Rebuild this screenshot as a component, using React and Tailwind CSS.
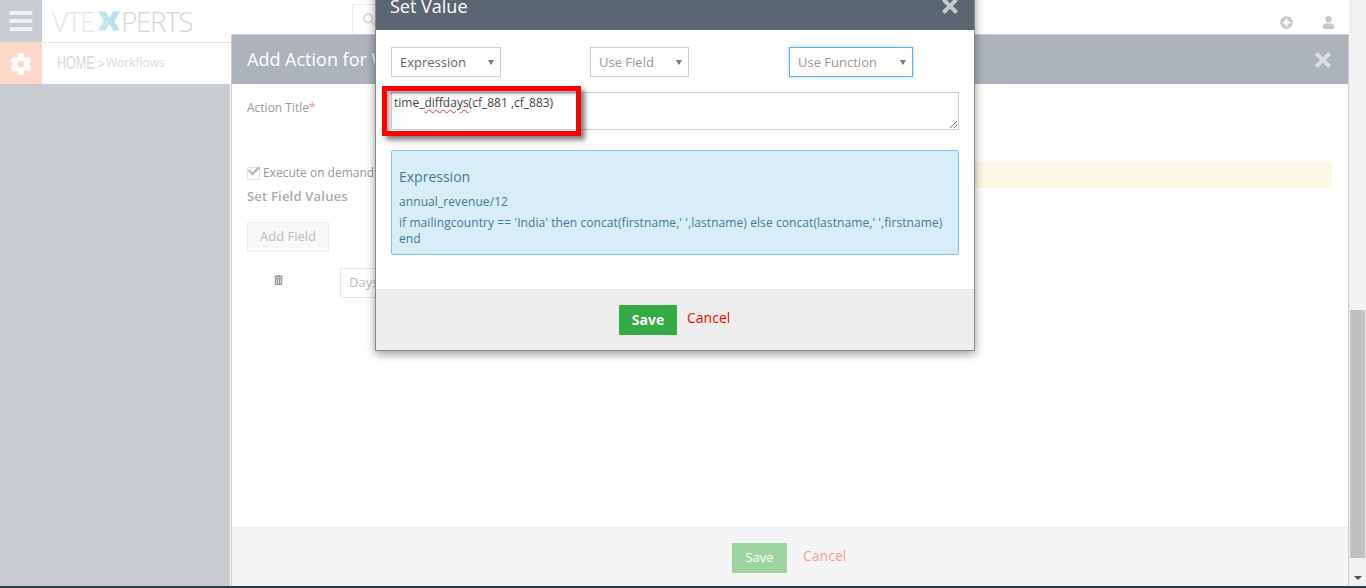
import React from "react";
import { FaBars, FaCog, FaPlusCircle, FaUser, FaTimes, FaSearch, FaTrashAlt, FaCheck } from "react-icons/fa";

function Sel({ label, w, dark, focus }) {
  return (
    <div className={`flex h-[30px] items-center justify-between bg-white pl-2 pr-[6px] text-[13px] ${w} ${dark ? "text-[#666]" : "text-[#999]"} border ${focus ? "border-[#66afe9] shadow-[0_0_3px_rgba(102,175,233,0.7)]" : "border-[#ccc]"}`}>
      <span className="pt-[1px]">{label}</span>
      <span className="h-0 w-0 border-x-[3px] border-t-[5px] border-x-transparent border-t-[#777]" />
    </div>
  );
}

export default function App() {
  return (
    <div className="relative h-[588px] w-[1366px] overflow-hidden bg-[#c8ccd0] font-['Open_Sans','Liberation_Sans',sans-serif]">
      <div className="flex h-[586px] flex-col">
        {/* header */}
        <div className="flex h-[42px] w-[1349px] items-center bg-white">
          <div className="flex h-[42px] w-[42px] items-center justify-center bg-[#c8ccd0] text-[#f2f3f4]">
            <FaBars className="h-[26px] w-[24px]" />
          </div>
          <div className="ml-[10px] flex w-[140px] items-center text-[28px] font-light leading-none tracking-[-1.5px] text-[#d6d6d6]">
            <span className="w-[48px] text-[#e6e6e6]">VTE</span>
            <svg width="23" height="20" viewBox="0 0 23 20" className="mr-[1px]">
              <path d="M0 0h8l6 10-6 10H0l6-10z" fill="#bfe8ea" />
              <path d="M23 0h-7l-5 8 1.5 2L11 12l5 8h7l-6-10z" fill="#bbdfec" />
            </svg>
            <span>PERTS</span>
          </div>
          <div className="mb-[8px] ml-[160px] flex h-[30px] w-[24px] items-center self-end overflow-hidden border border-b-0 border-[#eee] pl-[10px] text-[#ddd]">
            <FaSearch className="h-[13px] w-[13px] shrink-0" />
          </div>
          <div className="ml-auto flex items-center gap-[29px] pr-[14px] pt-[3px] text-[#c8c8c8]">
            <FaPlusCircle className="h-[13px] w-[13px]" />
            <FaUser className="h-[13px] w-[13px]" />
          </div>
        </div>
        {/* breadcrumb */}
        <div className="flex h-[42px] w-[1349px] border-t border-[#fbd9cd] bg-white">
          <div className="flex h-[41px] w-[42px] items-center justify-center bg-[#fdd8ca] text-white">
            <FaCog className="h-[22px] w-[22px]" />
          </div>
          <div className="ml-[15px] flex items-center text-[12px] text-[#d8d8dc]">
            <span className="w-[40px] origin-left scale-x-[0.66] font-['Liberation_Sans',sans-serif] text-[19px]">HOME</span>
            <span className="w-[9px] text-[15px] leading-none">&gt;</span>
            <span className="pb-[2px]">Workflows</span>
          </div>
        </div>
        {/* body */}
        <div className="flex flex-1">
          <div className="w-[230px]" />
          <div className="w-[1119px] bg-white" />
          <div className="w-[17px] bg-[#f1f1f1]" />
        </div>
      </div>
      <div className="h-[2px] bg-[#2f3a40]" />

      {/* scrollbar */}
      <div className="absolute left-[1349px] top-0 h-[586px] w-[17px] bg-[#f1f1f1]">
        <div className="absolute left-[1px] top-[310px] h-[248px] w-[15px] bg-[#c1c1c1]" />
        <div className="absolute left-[5px] top-[576px] h-0 w-0 border-x-[4px] border-t-[4px] border-x-transparent border-t-[#505050]" />
      </div>

      {/* back panel */}
      <div className="absolute left-[231px] top-[34px] flex h-[552px] w-[1118px] flex-col border-x border-t border-[#ccc] bg-white">
        <div className="flex h-[49px] shrink-0 items-center justify-between bg-[#adb3ba] pl-[15px] pr-[14px] text-white">
          <span className="text-[18px]">Add Action for Workflow</span>
          <FaTimes className="h-[22px] w-[22px] text-[#dcdfe2]" />
        </div>
        <div className="flex-1 px-[15px] text-[12px] text-[#999]">
          <div className="mt-[15px]">Action Title<span className="text-[#f09090]">*</span></div>
          <div className="mt-[47px] flex items-center">
            <span className="relative h-[13px] w-[13px] border border-[#e4e4e4]">
              <FaCheck className="absolute -top-[3px] left-0 h-[12px] w-[12px] text-[#bbb]" />
            </span>
            <span className="ml-[3px]">Execute on demand</span>
          </div>
          <div className="mt-[5px] text-[13px] font-semibold tracking-[0.2px] text-[#aaa]">Set Field Values</div>
          <div className="mt-[15px] flex h-[30px] w-[82px] items-center justify-center border border-[#eee] bg-[#f8f8f8] text-[13px] text-[#bbb]">Add Field</div>
          <div className="mt-[16px] flex items-start">
            <FaTrashAlt className="ml-[27px] mt-[7px] h-[10px] w-[9px] text-[#999]" />
            <div className="ml-[57px] flex h-[30px] w-[120px] items-center border border-[#e8e8e8] pl-2 text-[13px] text-[#bbb]">Days</div>
          </div>
          <div className="absolute left-[360px] right-[16px] top-[127px] h-[26px] bg-[#fcf8e8]" />
        </div>
        <div className="flex h-[59px] shrink-0 items-start border-t border-[#eee] bg-[#f5f5f5] pl-[500px] pt-[15px]">
          <div className="flex h-[30px] w-[55px] items-center justify-center bg-[#9dd4a1] text-[13px] text-white">Save</div>
          <span className="ml-[16px] text-[14px] leading-[26px] text-[#f99]">Cancel</span>
        </div>
      </div>

      {/* front modal */}
      <div className="absolute left-[375px] top-[-20px] flex h-[371px] w-[600px] flex-col border border-[#888] bg-white shadow-[0_3px_9px_rgba(0,0,0,0.4)]">
        <div className="flex h-[49px] shrink-0 justify-between bg-[#5a6773] pl-[14px] pr-[13px] text-white">
          <span className="pt-[12px] text-[18px]">Set Value</span>
          <FaTimes className="mt-[14px] h-[22px] w-[22px] text-[#c4c9ce]" />
        </div>
        <div className="flex-1 px-[15px] pt-[17px]">
          <div className="flex items-center">
            <Sel label="Expression" w="w-[110px]" dark />
            <div className="ml-[89px]"><Sel label="Use Field" w="w-[99px]" /></div>
            <div className="ml-[100px]"><Sel label="Use Function" w="w-[124px]" focus /></div>
          </div>
          <div className="relative mt-[15px] h-[38px] w-[568px] border border-[#ccc] pl-[2px] pt-[1px] text-[12px] text-[#444]">
            <span>time_</span><span className="underline decoration-wavy decoration-[#e33] decoration-[1px] underline-offset-2">diffdays</span><span>(cf_881 ,cf_883)</span>
            <svg width="9" height="9" viewBox="0 0 9 9" className="absolute bottom-0 right-0"><path d="M1 8l7-7M5 8l3-3" stroke="#666" strokeWidth="1" /></svg>
          </div>
          <div className="mt-[20px] h-[105px] w-[568px] rounded-[2px] border border-[#7ec5e6] bg-[#d9edf7] px-[7px] pt-[16px] text-[12px] leading-[16px] tracking-[0.08px] text-[#3d7a98]">
            <div className="text-[14px] leading-[20px] tracking-normal">Expression</div>
            <div className="mt-[7px]">annual_revenue/12</div>
            <div className="mt-[5px]">if mailingcountry == 'India' then concat(firstname,' ',lastname) else concat(lastname,' ',firstname) end</div>
          </div>
        </div>
        <div className="flex h-[61px] shrink-0 items-start border-t border-[#e5e5e5] bg-[#eee] pl-[243px] pt-[15px]">
          <div className="flex h-[30px] w-[58px] items-center justify-center bg-[#35aa47] pb-[1px] text-[14px] font-bold text-white">Save</div>
          <span className="ml-[10px] text-[14px] leading-[26px] text-[#f00]">Cancel</span>
        </div>
      </div>

      {/* red annotation */}
      <div className="absolute left-[382px] top-[86px] h-[50px] w-[199px] border-[5px] border-[#f00] shadow-[4px_4px_5px_rgba(0,0,0,0.5),inset_3px_3px_3px_rgba(0,0,0,0.3)]" />
    </div>
  );
}
